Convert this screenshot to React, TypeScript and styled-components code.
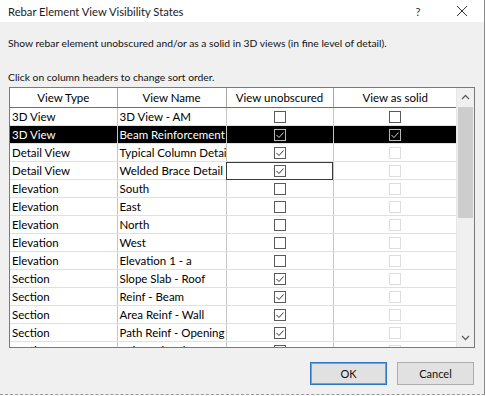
import React from 'react';
import styled, {createGlobalStyle, css} from 'styled-components';

const GlobalStyle = createGlobalStyle`
  html, body {
    margin: 0;
    padding: 0;
    background: #ffffff;
  }
  body {
    font-family: Lato, 'Noto Sans', Arial, sans-serif;
    font-size: 11.5px;
    color: #000;
  }
`;

type Row = {
  type: string;
  name: string;
  unobscured: boolean;
  solid: boolean;
  solidEnabled: boolean;
  selected?: boolean;
  focused?: boolean;
};

const rows: Row[] = [
  {type: '3D View', name: '3D View - AM', unobscured: false, solid: false, solidEnabled: true},
  {type: '3D View', name: 'Beam Reinforcement', unobscured: true, solid: true, solidEnabled: true, selected: true},
  {type: 'Detail View', name: 'Typical Column Detail', unobscured: true, solid: false, solidEnabled: false},
  {type: 'Detail View', name: 'Welded Brace Detail', unobscured: true, solid: false, solidEnabled: false, focused: true},
  {type: 'Elevation', name: 'South', unobscured: false, solid: false, solidEnabled: false},
  {type: 'Elevation', name: 'East', unobscured: false, solid: false, solidEnabled: false},
  {type: 'Elevation', name: 'North', unobscured: false, solid: false, solidEnabled: false},
  {type: 'Elevation', name: 'West', unobscured: false, solid: false, solidEnabled: false},
  {type: 'Elevation', name: 'Elevation 1 - a', unobscured: false, solid: false, solidEnabled: false},
  {type: 'Section', name: 'Slope Slab - Roof', unobscured: true, solid: false, solidEnabled: false},
  {type: 'Section', name: 'Reinf - Beam', unobscured: true, solid: false, solidEnabled: false},
  {type: 'Section', name: 'Area Reinf - Wall', unobscured: true, solid: false, solidEnabled: false},
  {type: 'Section', name: 'Path Reinf - Opening', unobscured: true, solid: false, solidEnabled: false},
  {type: 'Section', name: 'Reinf - Sketch', unobscured: false, solid: false, solidEnabled: false},
];

const Dialog = styled.div`
  width: 484px;
  height: 394px;
  border-right: 1px solid #8a8a8a;
  border-bottom: 1px dashed #9a9a9a;
  background: #f0f0f0;
  display: flex;
  flex-direction: column;
`;

const TitleBar = styled.div`
  height: 22px;
  background: #ffffff;
  display: flex;
  align-items: center;
  padding-left: 8px;
  font-size: 11.2px;
  color: #1a1a1a;
`;

const Title = styled.span`
  flex: 1;
`;

const TitleButton = styled.span`
  width: 44px;
  height: 22px;
  color: #333;
  display: flex;
  justify-content: center;
  align-items: center;
`;

const Body = styled.div`
  flex: 1;
  padding: 14px 0 0 9px;
  display: flex;
  flex-direction: column;
`;

const Note = styled.div<{$gap: number}>`
  margin-left: -1px;
  font-size: 10.3px;
  line-height: 15px;
  margin-bottom: ${({$gap}) => $gap}px;
  color: #111;
`;

const GridFrame = styled.div`
  width: 464px;
  height: 259px;
  border: 1px solid #7a7a7a;
  background: #ffffff;
  display: flex;
  overflow: hidden;
`;

const TableArea = styled.div`
  width: 447px;
  overflow: hidden;
`;

const Table = styled.table`
  border-collapse: collapse;
  table-layout: fixed;
  width: 447px;
`;

const HeadCell = styled.th`
  height: 19px;
  padding: 0;
  font-weight: normal;
  text-align: center;
  border-right: 1px solid #a8a8a8;
  border-bottom: 1px solid #6e6e6e;
  background: #ffffff;
  &:last-child {
    border-right: none;
  }
`;

const BodyRow = styled.tr<{$selected?: boolean}>`
  height: 18px;
  ${({$selected}) =>
    $selected &&
    css`
      background: #000000;
      color: #ffffff;
    `}
`;

const Cell = styled.td<{$center?: boolean; $focused?: boolean}>`
  height: 17px;
  padding: 0 0 0 2px;
  white-space: nowrap;
  overflow: hidden;
  text-overflow: clip;
  border-right: 1px solid #c4c4c4;
  border-bottom: 1px solid #e0e0e0;
  line-height: 17px;
  ${({$center}) =>
    $center &&
    css`
      text-align: center;
      padding: 0;
    `}
  ${({$focused}) =>
    $focused &&
    css`
      outline: 1px solid #3a3a3a;
      outline-offset: -1px;
    `}
  &:last-child {
    border-right: none;
  }
`;

const Box = styled.span<{$disabled?: boolean; $inverted?: boolean}>`
  display: inline-flex;
  align-items: center;
  justify-content: center;
  box-sizing: border-box;
  width: 12px;
  height: 12px;
  vertical-align: middle;
  margin-top: -2px;
  border: 1px solid ${({$disabled}) => ($disabled ? '#dcdcdc' : '#5a5a5a')};
  background: #ffffff;
  ${({$inverted}) =>
    $inverted &&
    css`
      border-color: #b8b8b8;
      background: #000000;
    `}
`;

const Scrollbar = styled.div`
  width: 17px;
  background: #f0f0f0;
  display: flex;
  flex-direction: column;
  border-left: 1px solid #e6e6e6;
`;

const Arrow = styled.div`
  height: 18px;
  display: flex;
  align-items: center;
  justify-content: center;
`;

const Track = styled.div`
  flex: 1;
  display: flex;
  flex-direction: column;
`;

const Thumb = styled.div`
  height: 111px;
  margin: 1px 1px 0 1px;
  background: #cdcdcd;
`;

const ButtonRow = styled.div`
  display: flex;
  justify-content: flex-end;
  gap: 10px;
  width: 465px;
  margin-top: 14px;
`;

const Button = styled.button<{$primary?: boolean}>`
  width: 77px;
  height: 23px;
  box-sizing: border-box;
  font-family: inherit;
  font-size: 11px;
  color: #111;
  background: #e1e1e1;
  border: 1px solid ${({$primary}) => ($primary ? '#2f76c0' : '#adadad')};
  ${({$primary}) =>
    $primary &&
    css`
      box-shadow: inset 0 0 0 1px #6ea3d8;
    `}
  padding: 0;
`;

function Check({checked, disabled, inverted}: {checked: boolean; disabled?: boolean; inverted?: boolean}) {
  return (
    <Box $disabled={disabled} $inverted={inverted}>
      {checked && (
        <svg width="10" height="10" viewBox="0 0 10 10">
          <polyline
            points="1.5,5 4,7.5 8.5,2.5"
            fill="none"
            stroke={inverted ? '#d0d0d0' : '#333'}
            strokeWidth="1"
          />
        </svg>
      )}
    </Box>
  );
}

function Chevron({down}: {down?: boolean}) {
  return (
    <svg width="9" height="6" viewBox="0 0 9 6">
      <polyline
        points={down ? '1,1 4.5,4.5 8,1' : '1,5 4.5,1.5 8,5'}
        fill="none"
        stroke="#606060"
        strokeWidth="1.3"
      />
    </svg>
  );
}

export default function App() {
  return (
    <>
      <GlobalStyle />
      <Dialog>
        <TitleBar>
          <Title>Rebar Element View Visibility States</Title>
          <TitleButton>?</TitleButton>
          <TitleButton>
            <svg width="12" height="12" viewBox="0 0 12 12">
              <path d="M1 1 L11 11 M11 1 L1 11" stroke="#333" strokeWidth="1" />
            </svg>
          </TitleButton>
        </TitleBar>
        <Body>
          <Note $gap={19}>
            Show rebar element unobscured and/or as a solid in 3D views (in fine level of detail).
          </Note>
          <Note $gap={2}>Click on column headers to change sort order.</Note>
          <GridFrame>
            <TableArea>
              <Table>
                <colgroup>
                  <col style={{width: 107}} />
                  <col style={{width: 109}} />
                  <col style={{width: 107}} />
                  <col style={{width: 124}} />
                </colgroup>
                <thead>
                  <tr>
                    <HeadCell>View Type</HeadCell>
                    <HeadCell>View Name</HeadCell>
                    <HeadCell>View unobscured</HeadCell>
                    <HeadCell>View as solid</HeadCell>
                  </tr>
                </thead>
                <tbody>
                  {rows.map((r, i) => (
                    <BodyRow key={i} $selected={r.selected}>
                      <Cell>{r.type}</Cell>
                      <Cell>{r.name}</Cell>
                      <Cell $center $focused={r.focused}>
                        <Check checked={r.unobscured} inverted={r.selected} />
                      </Cell>
                      <Cell $center>
                        <Check checked={r.solid} disabled={!r.solidEnabled} inverted={r.selected} />
                      </Cell>
                    </BodyRow>
                  ))}
                </tbody>
              </Table>
            </TableArea>
            <Scrollbar>
              <Arrow>
                <Chevron />
              </Arrow>
              <Track>
                <Thumb />
              </Track>
              <Arrow>
                <Chevron down />
              </Arrow>
            </Scrollbar>
          </GridFrame>
          <ButtonRow>
            <Button $primary>OK</Button>
            <Button>Cancel</Button>
          </ButtonRow>
        </Body>
      </Dialog>
    </>
  );
}
